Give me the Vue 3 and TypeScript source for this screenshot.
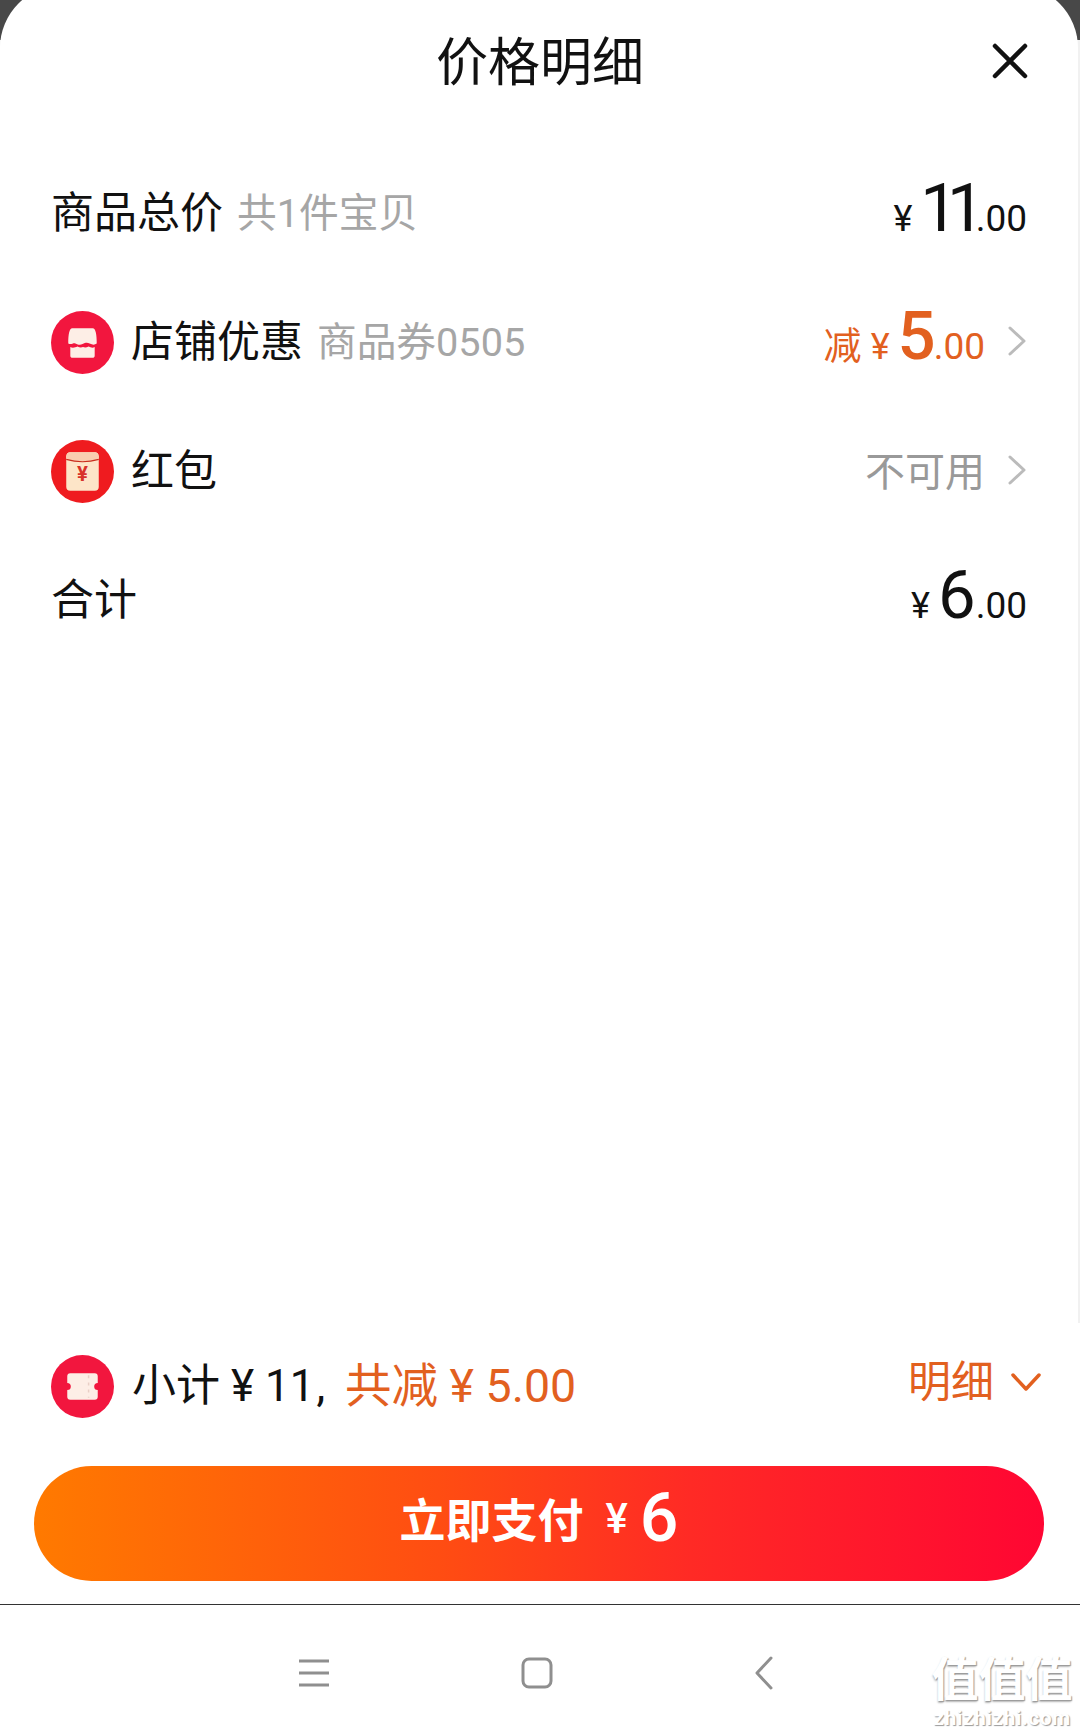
<template>
  <div class="page">
    <div class="sheet">
      <header class="title-bar">
        <h1 class="title">价格明细</h1>
        <svg class="close" viewBox="0 0 38 38">
          <path d="M4 4L34 34M34 4L4 34" stroke="#111" stroke-width="4.500" stroke-linecap="round" fill="none" />
        </svg>
      </header>

      <div class="rows">
        <div class="row row-total">
          <span class="label">商品总价</span>
          <span class="sub">共1件宝贝</span>
          <span class="price">
            <span class="yen">¥</span><span class="big">11</span><span class="cents">.00</span>
          </span>
        </div>

        <div class="row row-shop">
          <svg class="badge" viewBox="0 0 62 62">
            <circle cx="31" cy="31" r="31" fill="#f2163e" />
            <path d="M21 17H41C44 17 45 23 45 32C43 33.500 41 33.500 38 32C36 31 34 31 31 32.500C29 33.500 27 33.500 24 32C22 31 20 33.500 17 32C17 23 18 17 21 17Z" fill="#fdeee6" />
            <path d="M19 35.500C21 36.500 24 36 26 35C28 36 30 36 31.500 35.500C33 36 35 36 37 35C39 36 41 36.500 43 35.500V44C43 45.500 42 46 41 46H21C20 46 19 45.500 19 44Z" fill="#fdeee6" />
          </svg>
          <span class="label">店铺优惠</span>
          <span class="sub">商品券0505</span>
          <span class="price orange">
            <span class="minus">减</span><span class="yen">¥</span><span class="big">5</span><span class="cents">.00</span>
          </span>
          <svg class="arrow" viewBox="0 0 20 32">
            <path d="M3 3L17 16L3 29" stroke="#bbb" stroke-width="3" stroke-linecap="round" stroke-linejoin="round" fill="none" />
          </svg>
        </div>

        <div class="row row-packet">
          <svg class="badge" viewBox="0 0 62 62">
            <circle cx="31" cy="31" r="31" fill="#ef1b1f" />
            <rect x="15" y="12" width="32" height="38" rx="4" fill="#fde5c8" />
            <path d="M15 17c0-3 2-5 4-5h24c2 0 4 2 4 5v2c-10 3-22 3-32 0z" fill="#f9cdb0" />
            <path d="M15 19c10 3 22 3 32 0" stroke="#c92d1e" stroke-width="1.200" fill="none" />
            <text x="31" y="40" class="badge-yen">¥</text>
          </svg>
          <span class="label">红包</span>
          <span class="none">不可用</span>
          <svg class="arrow" viewBox="0 0 20 32">
            <path d="M3 3L17 16L3 29" stroke="#bbb" stroke-width="3" stroke-linecap="round" stroke-linejoin="round" fill="none" />
          </svg>
        </div>

        <div class="row row-sum">
          <span class="label">合计</span>
          <span class="price">
            <span class="yen">¥</span><span class="big">6</span><span class="cents">.00</span>
          </span>
        </div>
      </div>

      <div class="summary">
        <svg class="badge" viewBox="0 0 62 62">
          <circle cx="31" cy="31" r="31" fill="#f2163e" />
          <path d="M19 18H43a3 3 0 0 1 3 3v6.500a3.500 3.500 0 0 0 0 7v6.500a3 3 0 0 1-3 3H19a3 3 0 0 1-3-3v-6.500a3.500 3.500 0 0 0 0-7v-6.500a3 3 0 0 1 3-3z" fill="#fdeee6" />
          <path d="M37 20v22" stroke="#e9cfc6" stroke-width="1.500" stroke-dasharray="3 4" />
        </svg>
        <span class="summary-text">小计 ¥ 11<span class="comma">,</span></span>
        <span class="summary-off">共减 ¥ 5.00</span>
        <span class="detail">明细</span>
        <svg class="chevron" viewBox="0 0 32 22">
          <path d="M3 4L16 18L29 4" stroke="#e2601f" stroke-width="3.500" stroke-linecap="round" stroke-linejoin="round" fill="none" />
        </svg>
      </div>
    </div>

    <div class="pay-wrap">
      <button class="pay">
        <span class="pay-label">立即支付</span>
        <span class="pay-yen">¥</span>
        <span class="pay-amount">6</span>
      </button>
    </div>

    <nav class="nav">
      <svg class="nav-menu" viewBox="0 0 32 28">
        <path d="M1 2H31M1 14H31M1 26H31" stroke="#8f8f8f" stroke-width="3" fill="none" />
      </svg>
      <svg class="nav-home" viewBox="0 0 32 32">
        <rect x="2" y="2" width="28" height="28" rx="6" stroke="#8f8f8f" stroke-width="3" fill="none" />
      </svg>
      <svg class="nav-back" viewBox="0 0 20 34">
        <path d="M17 2L3 17L17 32" stroke="#8f8f8f" stroke-width="3" stroke-linecap="round" stroke-linejoin="round" fill="none" />
      </svg>
      <div class="watermark">
        <div class="wm-mark">值值值</div>
        <div class="wm-url">zhizhizhi.com</div>
      </div>
    </nav>
  </div>
</template>

<script setup lang="ts">
</script>

<style>
html,
body {
  margin: 0;
  background: #fff;
}
</style>

<style scoped>
.page {
  width: 1080px;
  height: 1735px;
  display: flex;
  flex-direction: column;
  overflow: hidden;
  background: #fff;
  color: #111;
  font-family: Roboto, "Noto Sans CJK SC", sans-serif;
}

.sheet {
  height: 1466px;
  display: flex;
  flex-direction: column;
  flex-shrink: 0;
  background: linear-gradient(#484848 0, #484848 40px, #f1f1f1 40px);
}

/* the sheet's rounded top starts above the visible area */
.title-bar {
  height: 124px;
  margin-top: -15px;
  margin-right: 2px;
  padding-top: 17px;
  flex-shrink: 0;
  display: flex;
  align-items: center;
  justify-content: center;
  position: relative;
  background: #fff;
  border-radius: 63px 63px 0 0;
}

.title {
  margin: 0 0 0 2px;
  font-size: 52px;
  font-weight: 400;
  line-height: 1;
}

.close {
  position: absolute;
  right: 49px;
  top: 57px;
  width: 38px;
  height: 38px;
}

.rows {
  flex: 1;
  display: flex;
  flex-direction: column;
  padding: 23px 51px 0 51px;
  background: #fff;
  border-right: 2px solid #f1f1f1;
}

.row {
  height: 129px;
  display: flex;
  align-items: center;
}

.badge {
  width: 63px;
  height: 63px;
  flex-shrink: 0;
  margin-right: 17px;
}

.summary .badge {
  margin-right: 18px;
}

.badge-yen {
  font-size: 20px;
  font-weight: 700;
  fill: #d8322a;
  text-anchor: middle;
}

.label {
  font-size: 43px;
  line-height: 1;
}

.sub {
  margin-left: 14px;
  font-size: 39.700px;
  line-height: 1;
  color: #a6a6a6;
}

.price {
  margin-left: auto;
  margin-bottom: 11px;
  display: flex;
  align-items: baseline;
  color: #111;
}

.minus {
  font-size: 38px;
  margin-right: 9px;
}

.yen {
  font-size: 36px;
  margin-right: 8px;
}

.big {
  font-size: 67px;
  line-height: 1;
}

.row-total .big {
  letter-spacing: -11px;
}

.row-total .cents {
  margin-left: 2px;
}

.cents {
  font-size: 37px;
}

.orange {
  margin-bottom: 13px;
  color: #e2601f;
}

.orange .big {
  margin-right: -2px;
  font-weight: 500;
}

.arrow {
  width: 20px;
  height: 32px;
  margin-left: 22px;
  margin-bottom: 4px;
  flex-shrink: 0;
}

.none {
  margin-left: auto;
  margin-bottom: 5px;
  font-size: 40px;
  color: #999;
}

.summary {
  height: 100px;
  flex-shrink: 0;
  display: flex;
  align-items: center;
  padding: 13px 38px 30px 51px;
  background: #fff;
}

.summary-text {
  font-size: 44px;
  line-height: 1;
}

.comma {
  margin-left: 2px;
}

.summary-off {
  margin-left: 20px;
  font-size: 46.500px;
  line-height: 1;
  color: #e2601f;
}

.detail {
  margin-left: auto;
  margin-top: -8px;
  font-size: 43px;
  line-height: 1;
  color: #e2601f;
}

.chevron {
  width: 32px;
  height: 22px;
  margin-left: 16px;
  margin-top: -8px;
}

.pay-wrap {
  padding: 0 36px 23px 34px;
  background: #fff;
  border-bottom: 1px solid #333;
}

.pay {
  width: 100%;
  height: 115px;
  padding: 0 0 10px;
  border: none;
  border-radius: 58px;
  display: flex;
  align-items: center;
  justify-content: center;
  color: #fff;
  font-family: inherit;
  background: linear-gradient(90deg, #ff7a00 0%, #ff4d12 40%, #ff2a25 65%, #ff0633 100%);
}

.pay-label {
  margin-bottom: 3px;
  font-size: 46px;
  font-weight: 600;
}

.pay-yen {
  margin-left: 22px;
  font-size: 42px;
  font-weight: 500;
}

.pay-amount {
  margin-left: 12px;
  margin-top: -2px;
  font-size: 68px;
  font-weight: 500;
}

.nav {
  flex: 1;
  position: relative;
  display: flex;
  align-items: center;
  background: #fff;
  padding-left: 298px;
  padding-top: 6px;
}

.nav-menu {
  width: 32px;
  height: 28px;
}

.nav-home {
  width: 32px;
  height: 32px;
  margin-left: 191px;
}

.nav-back {
  width: 20px;
  height: 34px;
  margin-left: 201px;
}

.watermark {
  position: absolute;
  left: 930px;
  top: 50px;
  width: 144px;
  text-align: center;
  color: #fff;
}

.wm-mark {
  font-size: 47px;
  line-height: 50px;
  font-weight: 700;
  text-shadow: 1px 1px 1px #9a9a9a, 0 2px 2px #bbb;
}

.wm-url {
  font-size: 21px;
  line-height: 26px;
  font-weight: 700;
  letter-spacing: 0.500px;
  text-shadow: 1px 1px 1px #9a9a9a;
}
</style>
